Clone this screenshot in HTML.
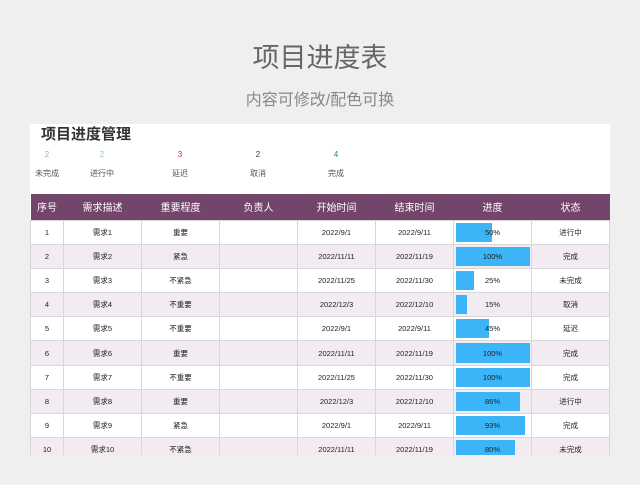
<!DOCTYPE html>
<html><head><meta charset="utf-8"><style>
*{margin:0;padding:0;box-sizing:border-box}
body{width:640px;height:485px;background:#efefef;font-family:"Liberation Sans","Noto Sans CJK SC",sans-serif;position:relative;overflow:hidden}
.t{position:absolute;left:0;width:640px;text-align:center}
#panel{position:absolute;left:30px;top:124px;width:580px;height:331px;background:#fff;overflow:hidden}
.s{position:absolute;text-align:center;width:60px;font-size:8px;color:#555}
table{position:absolute;left:0;top:70px;border-collapse:collapse;width:579px;table-layout:fixed}
th{background:#74456a;color:#fff;font-size:10px;font-weight:normal;height:26px}
td{font-size:7.5px;color:#222;text-align:center;height:24.2px;border:1px solid #d8d8d8;position:relative}
tr:nth-child(odd) td{background:#f2ebf2}
.b{position:absolute;left:2px;top:2px;bottom:2px;background:#3bb5f7}
.p{position:relative}
</style></head><body>
<div class="t" style="top:36px;font-size:27px;color:#666">项目进度表</div>
<div class="t" style="top:86px;font-size:16px;color:#888">内容可修改/配色可换</div>
<div id="panel">
<div style="position:absolute;left:11px;top:-1px;font-size:15px;font-weight:bold;color:#333">项目进度管理</div>
<div class="s" style="left:-13px;top:26px;color:#7bb8e8">2</div><div class="s" style="left:-13px;top:44px">未完成</div>
<div class="s" style="left:42px;top:26px;color:#8cc6e0">2</div><div class="s" style="left:42px;top:44px">进行中</div>
<div class="s" style="left:120px;top:26px;color:#e52222">3</div><div class="s" style="left:120px;top:44px">延迟</div>
<div class="s" style="left:198px;top:26px;color:#444">2</div><div class="s" style="left:198px;top:44px">取消</div>
<div class="s" style="left:276px;top:26px;color:#1a9c4a">4</div><div class="s" style="left:276px;top:44px">完成</div>
<table>
<colgroup><col style="width:33px"><col style="width:78px"><col style="width:78px"><col style="width:78px"><col style="width:78px"><col style="width:78px"><col style="width:78px"><col style="width:78px"></colgroup>
<tr><th>序号</th><th>需求描述</th><th>重要程度</th><th>负责人</th><th>开始时间</th><th>结束时间</th><th>进度</th><th>状态</th></tr>
<tr><td>1</td><td>需求1</td><td>重要</td><td></td><td>2022/9/1</td><td>2022/9/11</td><td><div class="b" style="width:36px"></div><span class="p">50%</span></td><td>进行中</td></tr>
<tr><td>2</td><td>需求2</td><td>紧急</td><td></td><td>2022/11/11</td><td>2022/11/19</td><td><div class="b" style="width:74px"></div><span class="p">100%</span></td><td>完成</td></tr>
<tr><td>3</td><td>需求3</td><td>不紧急</td><td></td><td>2022/11/25</td><td>2022/11/30</td><td><div class="b" style="width:18px"></div><span class="p">25%</span></td><td>未完成</td></tr>
<tr><td>4</td><td>需求4</td><td>不重要</td><td></td><td>2022/12/3</td><td>2022/12/10</td><td><div class="b" style="width:11px"></div><span class="p">15%</span></td><td>取消</td></tr>
<tr><td>5</td><td>需求5</td><td>不重要</td><td></td><td>2022/9/1</td><td>2022/9/11</td><td><div class="b" style="width:33px"></div><span class="p">45%</span></td><td>延迟</td></tr>
<tr><td>6</td><td>需求6</td><td>重要</td><td></td><td>2022/11/11</td><td>2022/11/19</td><td><div class="b" style="width:74px"></div><span class="p">100%</span></td><td>完成</td></tr>
<tr><td>7</td><td>需求7</td><td>不重要</td><td></td><td>2022/11/25</td><td>2022/11/30</td><td><div class="b" style="width:74px"></div><span class="p">100%</span></td><td>完成</td></tr>
<tr><td>8</td><td>需求8</td><td>重要</td><td></td><td>2022/12/3</td><td>2022/12/10</td><td><div class="b" style="width:64px"></div><span class="p">86%</span></td><td>进行中</td></tr>
<tr><td>9</td><td>需求9</td><td>紧急</td><td></td><td>2022/9/1</td><td>2022/9/11</td><td><div class="b" style="width:69px"></div><span class="p">93%</span></td><td>完成</td></tr>
<tr><td>10</td><td>需求10</td><td>不紧急</td><td></td><td>2022/11/11</td><td>2022/11/19</td><td><div class="b" style="width:59px"></div><span class="p">80%</span></td><td>未完成</td></tr>
</table>
</div>
</body></html>
